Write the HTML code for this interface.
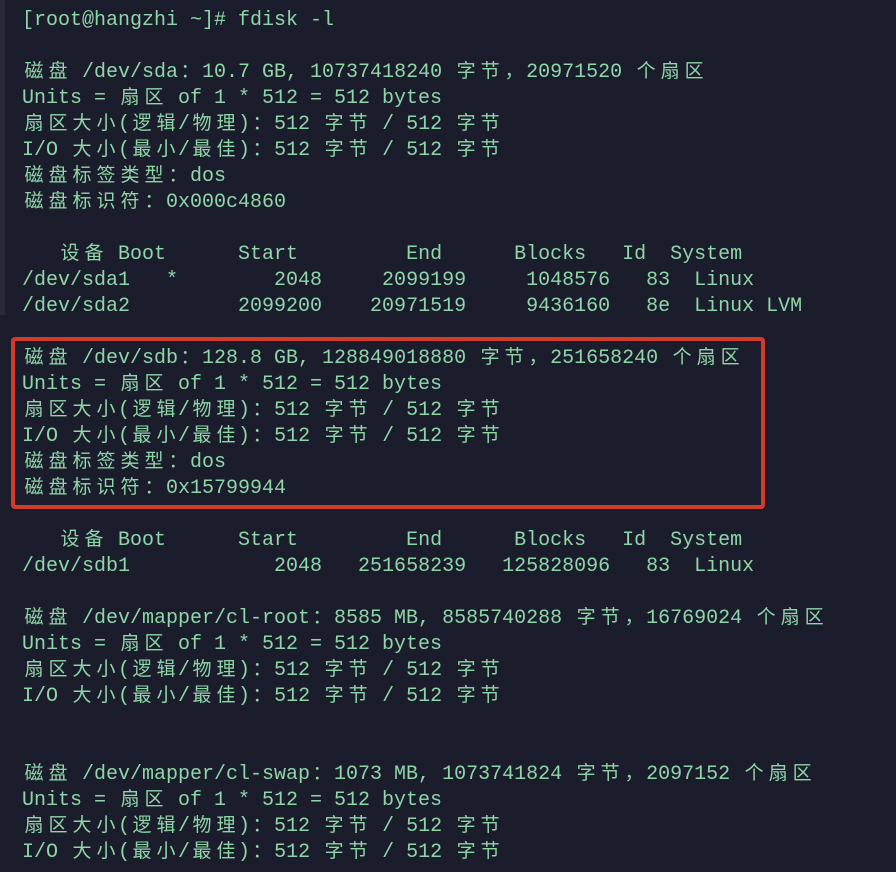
<!DOCTYPE html>
<html><head><meta charset="utf-8">
<style>
html,body{margin:0;padding:0;}
body{width:896px;height:872px;overflow:hidden;background:#1b1d2c;position:relative;}
.strip{position:absolute;left:0;top:0;width:5px;height:315px;background:#272a3a;}
#t{position:absolute;left:22px;top:8px;margin:0;font-family:"Liberation Mono","Noto Sans CJK SC",monospace;font-size:20px;line-height:26px;color:#8fd6a8;white-space:pre;}
#t .l{height:26px;line-height:26px;overflow:visible;white-space:pre;}
.c{display:inline-block;width:24px;line-height:20px;vertical-align:baseline;text-align:center;font-family:"Noto Sans CJK SC","WenQuanYi Zen Hei",sans-serif;font-size:19px;}
.box{position:absolute;left:11px;top:337px;width:746px;height:164px;border:4px solid #d23a2a;border-radius:4px;}
</style></head><body>
<div class="strip"></div>
<pre id="t">[root@hangzhi ~]# fdisk -l

磁盘 /dev/sda：10.7 GB, 10737418240 字节，20971520 个扇区
Units = 扇区 of 1 * 512 = 512 bytes
扇区大小(逻辑/物理)：512 字节 / 512 字节
I/O 大小(最小/最佳)：512 字节 / 512 字节
磁盘标签类型：dos
磁盘标识符：0x000c4860

   设备 Boot      Start         End      Blocks   Id  System
/dev/sda1   *        2048     2099199     1048576   83  Linux
/dev/sda2         2099200    20971519     9436160   8e  Linux LVM

磁盘 /dev/sdb：128.8 GB, 128849018880 字节，251658240 个扇区
Units = 扇区 of 1 * 512 = 512 bytes
扇区大小(逻辑/物理)：512 字节 / 512 字节
I/O 大小(最小/最佳)：512 字节 / 512 字节
磁盘标签类型：dos
磁盘标识符：0x15799944

   设备 Boot      Start         End      Blocks   Id  System
/dev/sdb1            2048   251658239   125828096   83  Linux

磁盘 /dev/mapper/cl-root：8585 MB, 8585740288 字节，16769024 个扇区
Units = 扇区 of 1 * 512 = 512 bytes
扇区大小(逻辑/物理)：512 字节 / 512 字节
I/O 大小(最小/最佳)：512 字节 / 512 字节


磁盘 /dev/mapper/cl-swap：1073 MB, 1073741824 字节，2097152 个扇区
Units = 扇区 of 1 * 512 = 512 bytes
扇区大小(逻辑/物理)：512 字节 / 512 字节
I/O 大小(最小/最佳)：512 字节 / 512 字节</pre>
<div class="box"></div>
<script>
var p=document.getElementById('t');
var lines=p.textContent.split('\n');
p.innerHTML=lines.map(function(s){return '<div class="l">'+(s.replace(/[\u3000-\u9fff\uff00-\uffef]/g,function(m){return '<span class="c">'+m+'</span>';})||' ')+'</div>';}).join('');
</script>
</body></html>
